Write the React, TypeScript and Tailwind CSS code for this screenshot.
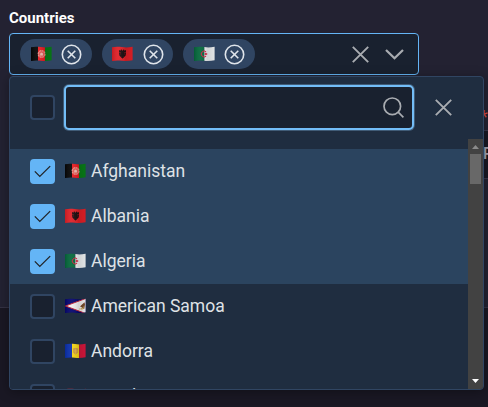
import React from "react";

type Code = "af" | "al" | "dz" | "as" | "ad" | "ao";

const wave = "M0 1.3C3.5 .4 6.5 .5 10 1.1S16.5 1.6 20.6 .8V14.3C16.5 15.2 13.5 15.3 10 14.8S3.5 14.4 0 15Z";

function Flag({ code, id }: { code: Code; id: string }) {
  return (
    <svg width="21" height="16" viewBox="0 0 21 16" className="shrink-0">
      <defs>
        <clipPath id={id}><path d={wave} /></clipPath>
        <linearGradient id={id + "s"}>
          <stop offset="0" stopColor="#000" stopOpacity=".12" />
          <stop offset=".3" stopColor="#fff" stopOpacity=".06" />
          <stop offset=".65" stopColor="#000" stopOpacity=".12" />
          <stop offset="1" stopColor="#000" stopOpacity=".04" />
        </linearGradient>
      </defs>
      <g clipPath={`url(#${id})`}>
        {code === "af" && (
          <>
            <path fill="#050505" d="M0 0h7v16H0z" />
            <path fill="#e81b20" d="M7 0h7v16H7z" />
            <path fill="#087a16" d="M14 0h7v16h-7z" />
            <circle cx="10.6" cy="8" r="3.4" fill="#e65a54" stroke="#eb8d86" strokeWidth="1.2" strokeDasharray="2 .6" />
            <path d="M9.2 9.5V7.4l1.4-1 1.4 1v2.1z" fill="#f0b8ae" />
          </>
        )}
        {code === "al" && (
          <>
            <path fill="#df1f26" d="M0 0h21v16H0z" />
            <path fill="#180b0d" d="M10.5 5 9.8 3.6 8.3 3.9l.5 1L7 4v5.5l1 .1v1.1l1.2-.1-.2 1.1 1 .1.5 1.2.5-1.2 1-.1-.2-1.1 1.2.1V9.6l1-.1V4l-1.8.9.5-1-1.5-.3Z" />
            <path stroke="#df1f26" strokeWidth=".5" d="m7 6.2 1.7.5M14 6.2l-1.7.5M7.2 8.2l1.4-.2m5.2.2-1.4-.2" />
          </>
        )}
        {code === "dz" && (
          <>
            <path fill="#04683b" d="M0 0h10.4v16H0z" />
            <path fill="#eceff0" d="M10.4 0H21v16H10.4z" />
            <path d="M12.2 5.7a3 3 0 1 0 0 4.6" fill="none" stroke="#d5213e" strokeWidth="1" />
            <path d="m9.8 8 1.4-.5.1-1.3.9 1.1 1.3-.3-.8 1 .8 1.1-1.3-.3-.9 1-.1-1.3Z" fill="#d5213e" />
          </>
        )}
        {code === "as" && (
          <>
            <path fill="#05056f" d="M0 0h21v16H0z" />
            <path fill="#f1eeee" stroke="#c02136" strokeWidth="1" d="M.5 8 22 0v16Z" />
            <path fill="#754b2b" d="m15 8.5 2.3-2.2 2.2-2 .5 2.2-.8 4.5-1.9-.8-1.6 1 1.3-2Z" />
            <path stroke="#d4b462" strokeWidth=".8" d="m14 11 4.5-.4M16.5 12.2l2.2-3.7" />
          </>
        )}
        {code === "ad" && (
          <>
            <path fill="#092fad" d="M0 0h7v16H0z" />
            <path fill="#f5d414" d="M7 0h7.2v16H7z" />
            <path fill="#d2163b" d="M14.2 0H21v16h-6.8z" />
            <path d="M8.6 5.6h4v4L10.6 11l-2-1.4Z" fill="#d29d3c" stroke="#c29545" strokeWidth=".8" />
            <path d="M10.6 5.7V11M8.7 8h3.8" stroke="#e8bd45" strokeWidth=".6" />
          </>
        )}
        {code === "ao" && (
          <>
            <path fill="#b81f30" d="M0 0h21v8H0z" />
            <path fill="#050505" d="M0 8h21v8H0z" />
          </>
        )}
        <path d="M0 0h21v16H0z" fill={`url(#${id}s)`} />
      </g>
    </svg>
  );
}

function Chip({ code }: { code: Code }) {
  return (
    <span className="flex h-[30px] w-[71.5px] items-center rounded-full bg-[#304562] pl-[10.5px]">
      <Flag code={code} id={"chip-" + code} />
      <svg width="21" height="21" viewBox="0 0 21 21" fill="none" stroke="#dfe4ea" strokeWidth="1.6" className="ml-[9.8px]">
        <circle cx="10.5" cy="10.5" r="9.2" />
        <path d="m6.7 6.7 7.6 7.6m0-7.6-7.6 7.6" />
      </svg>
    </span>
  );
}

function Cross() {
  return (
    <svg width="17" height="17" viewBox="0 0 17 17" fill="none" stroke="#a9acb1" strokeWidth="1.9">
      <path d="m.8.8 15.4 15.4m0-15.4L.8 16.2" />
    </svg>
  );
}

function Checkbox({ checked = false }: { checked?: boolean }) {
  return (
    <span className={`flex size-[25px] shrink-0 items-center justify-center rounded-[4px] border-2 ${checked ? "border-[#64b5f6] bg-[#64b5f6]" : "border-[#304562] bg-[#19212f]"}`}>
      {checked && (
        <svg width="17" height="13" viewBox="0 0 17 13" fill="none" stroke="#212529" strokeWidth="1.3">
          <path d="m.8 6.4 5 5L16.2 1.1" />
        </svg>
      )}
    </span>
  );
}

const countries: { code: Code; name: string; checked?: boolean }[] = [
  { code: "af", name: "Afghanistan", checked: true },
  { code: "al", name: "Albania", checked: true },
  { code: "dz", name: "Algeria", checked: true },
  { code: "as", name: "American Samoa" },
  { code: "ad", name: "Andorra" },
  { code: "ao", name: "Angola" },
];

export default function App() {
  return (
    <main className="relative h-[407px] w-[488px] overflow-hidden bg-[#1a1824] font-['Roboto',sans-serif]">
      <div className="flex h-[308px] flex-col border-b border-[#343244] bg-[#232232]">
        <label className="ml-[9px] mt-[8px] h-[25px] text-[15px] font-bold leading-[20px] text-white">Countries</label>
        <div className="ml-[9px] flex h-[42px] w-[410px] items-center rounded-[4px] border border-[#64b5f6] bg-[#19212f] pl-[10px]">
          <div className="flex gap-[10px]">
            <Chip code="af" />
            <Chip code="al" />
            <Chip code="dz" />
          </div>
          <div className="ml-auto mr-[14px] flex items-center gap-[16px]">
            <Cross />
            <svg width="19" height="11" viewBox="0 0 19 11" fill="none" stroke="#a9acb1" strokeWidth="2.2">
              <path d="m1 1 8.5 8.3L18 1" />
            </svg>
          </div>
        </div>
        <div className="ml-[480px] mt-[32px] h-[24px] text-[18px] leading-[20px] text-[#d84a43]">*</div>
        <div className="ml-[470px] -mt-[1px] flex h-[49px] shrink-0 items-center border-y border-[#38364a] bg-[#191824] pl-[13px] pb-[2px] text-[16px] font-medium text-[#a5a3b1]">P</div>
      </div>

      <section className="absolute left-[9px] top-[76px] flex h-[314px] w-[475px] flex-col overflow-hidden rounded-[4px] border border-[#304562] bg-[#1f2d40] shadow-[0_2px_12px_rgba(0,0,0,0.35)]">
        <header className="flex h-[62px] shrink-0 items-center pb-[1px] pl-[20px]">
          <Checkbox />
          <div className="ml-[9px] flex h-[45px] w-[350px] items-center justify-end rounded-[5px] border-2 border-[#73bdf7] bg-[#19212f] pr-[8px] shadow-[0_0_0_1px_rgba(147,203,249,0.3)]">
            <svg width="21" height="21" viewBox="0 0 21 21" fill="none" stroke="#a9acb1" strokeWidth="1.7">
              <circle cx="9.3" cy="9.3" r="8.3" />
              <path d="m15.2 15.2 5.2 5.2" />
            </svg>
          </div>
          <span className="ml-[20.5px]"><Cross /></span>
        </header>
        <div className="flex min-h-0 flex-1">
          <ul className="w-[458px] overflow-hidden pt-[10px]">
            {countries.map(({ code, name, checked }) => (
              <li key={code} className={`flex h-[45px] items-center pl-[20px] text-[17.5px] leading-[21px] text-[#dfe2e6] ${checked ? "bg-[#2b445f]" : "bg-[#1f2d40]"}`}>
                <Checkbox checked={checked} />
                <span className="-mt-[1px] ml-[10px] flex items-center"><Flag code={code} id={"row-" + code} /></span>
                <span className="-mt-[1px] ml-[5px]">{name}</span>
              </li>
            ))}
          </ul>
          <div className="flex w-[15px] flex-col items-center bg-[#424242]">
            <svg width="15" height="15" viewBox="0 0 15 15"><path d="M4 10h7L7.5 6Z" fill="#8b8b8b" /></svg>
            <div className="h-[30px] w-[11px] bg-[#686868]" />
            <svg width="15" height="15" viewBox="0 0 15 15" className="mt-auto"><path d="M4 5h7L7.5 9Z" fill="#fff" /></svg>
          </div>
        </div>
      </section>
    </main>
  );
}
